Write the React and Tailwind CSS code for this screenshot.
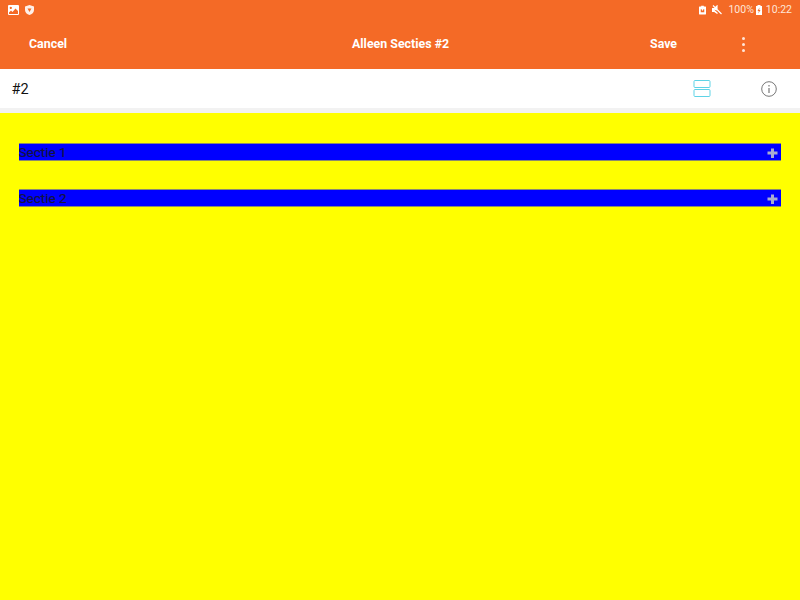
import React from "react";

function Section({ title }) {
  return (
    <div className="flex h-[18px] items-center justify-between border-t border-b border-[#8a8a70] bg-[#0000ff] pr-[3.500px] text-[13.5px] leading-none text-[#14143c]">
      <span className="-ml-[0.5px] translate-y-[1px] [-webkit-text-stroke:0.2px_#14143c]">{title}</span>
      <svg width="11" height="11" viewBox="0 0 11 11" className="translate-y-[1px]">
        <path d="M4 0.500h3v3h3.500v3h-3.500v3.500h-3v-3.500h-3.500v-3h3.500z" fill="#a8acd0" />
      </svg>
    </div>
  );
}

export default function App() {
  return (
    <div className="flex h-[600px] w-[800px] flex-col overflow-hidden bg-[#ffff00] font-['Roboto',sans-serif]">
      <div className="h-[69px] shrink-0 bg-[#f46a26] text-white">
        <div className="flex h-[20px] items-center justify-between pl-[8px] pr-[8px]">
          <div className="flex items-center gap-[6px]">
            <svg width="11" height="10" viewBox="0 0 11 10">
              <path fillRule="evenodd" d="M1 0h9a1 1 0 0 1 1 1v8a1 1 0 0 1-1 1H1a1 1 0 0 1-1-1V1a1 1 0 0 1 1-1zM1 7.500v1.500h9V6L7.500 3.500 4.500 7 3 5.500zM2.800 1.800a1.100 1.100 0 1 0 .01 0z" fill="#fff" />
            </svg>
            <svg width="9" height="10" viewBox="0 0 9 10">
              <path fillRule="evenodd" d="M4.500 0L9 1.500V5c0 2.500-2 4.300-4.500 5C2 9.300 0 7.500 0 5V1.500zM2.500 3.500L4.500 7l2-3.500z" fill="#fff" fillOpacity="0.9" />
            </svg>
          </div>
          <div className="flex items-center text-[10.5px] leading-none text-[#ffe6d8]">
            <svg width="7" height="10" viewBox="0 0 8 10" className="mr-[6px]">
              <path fillRule="evenodd" d="M2.500 0h3v1H7.500a.5.5 0 0 1 .5.500V9.500a.5.500 0 0 1-.5.500H.5a.5.500 0 0 1-.5-.5V1.500A.5.500 0 0 1 .5 1H2.500zM2 4v3.500h4V4H5L4 6 3 4z" fill="#fff" />
            </svg>
            <svg width="10" height="10" viewBox="0 0 10 10" className="mr-[6px]">
              <path d="M0.500 3.500H2.500L5 1V5zM5.500 8.500L2.500 6.500H0.500V4zM1 0.500l8.500 8.500" fill="#fff" stroke="#fff" strokeWidth="1.200" />
            </svg>
            <span>100%</span>
            <svg width="6" height="10" viewBox="0 0 6 10" className="ml-[2px] mr-[4px]">
              <path fillRule="evenodd" d="M1.500 0h3v1H6V10H0V1H1.500zM3.500 2.500L1.500 6H2.800L2.300 8.500 4.500 5H3.200z" fill="#fff" />
            </svg>
            <span>10:22</span>
          </div>
        </div>
        <div className="flex h-[49px] items-center text-[12.4px] font-bold leading-none">
          <span className="ml-[29px] w-[323px]">Cancel</span>
          <span className="w-[298px]">Alleen Secties #2</span>
          <span className="w-[92px]">Save</span>
          <div className="flex flex-col gap-[3px]">
            <div className="size-[3px] rounded-full bg-[#ffe6d8]" />
            <div className="size-[3px] rounded-full bg-[#ffe6d8]" />
            <div className="size-[3px] rounded-full bg-[#ffe6d8]" />
          </div>
        </div>
      </div>
      <div className="flex h-[39px] shrink-0 items-center bg-white pl-[11.5px] text-[14.5px] text-[#111]">
        <span className="w-[681.5px] translate-y-[1px]">#2</span>
        <svg width="18" height="17" viewBox="0 0 18 17" fill="none" stroke="#5fd3e6" strokeWidth="1">
          <rect x="1" y="0.500" width="16" height="7" rx="1" />
          <rect x="1" y="9.500" width="16" height="7" rx="1" />
        </svg>
        <svg width="16" height="16" viewBox="0 0 16 16" fill="none" className="ml-[50px]">
          <circle cx="8" cy="8" r="7.300" stroke="#777" strokeWidth="1" />
          <path d="M8 7v5" stroke="#777" strokeWidth="1.200" />
          <path d="M8 4v1.400" stroke="#777" strokeWidth="1.200" />
        </svg>
      </div>
      <div className="h-[5px] shrink-0 bg-[#f2f2f2]" />
      <div className="flex flex-col gap-[28px] px-[19px] pt-[30px]">
        <Section title="Sectie 1" />
        <Section title="Sectie 2" />
      </div>
    </div>
  );
}
